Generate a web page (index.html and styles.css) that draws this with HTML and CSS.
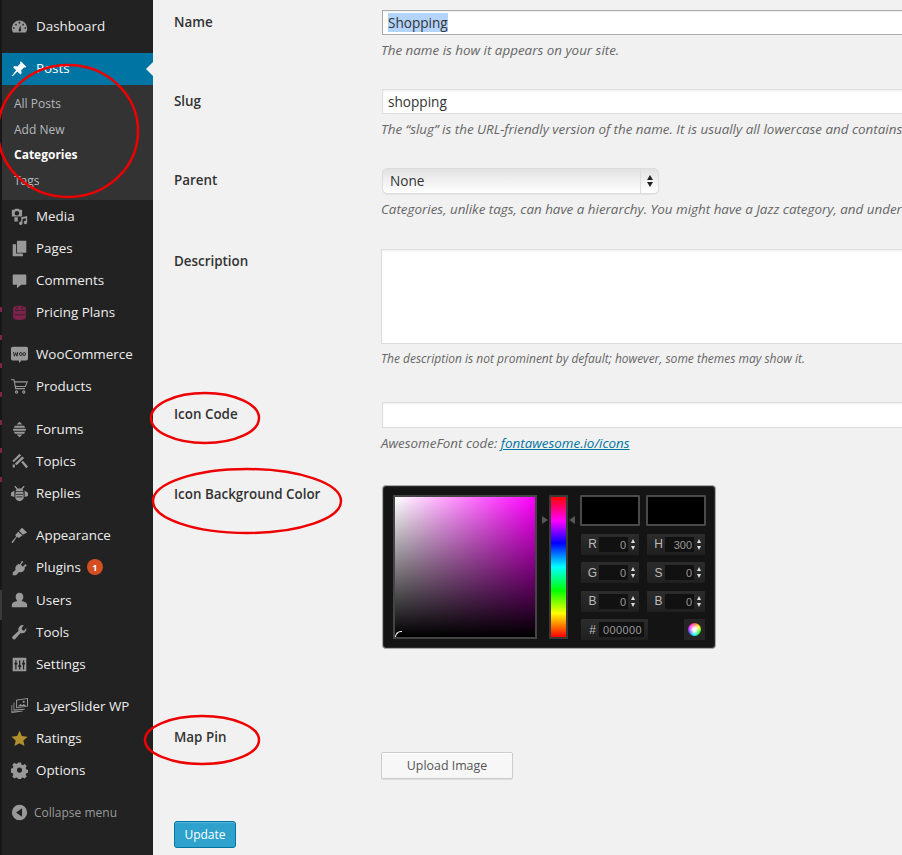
FILE: index.html
```html
<!DOCTYPE html>
<html lang="en">
<head>
<meta charset="utf-8">
<title>Edit Category</title>
<link rel="stylesheet" href="styles.css">
</head>
<body>
<div class="app">
  <div class="strip"></div>
  <nav class="sidebar">
    <ul class="menu first">
      <li class="item"><svg class="ic" viewBox="0 0 20 20"><path d="M10 3a9 9 0 0 0-9 9c0 2 .6 3.600 1.500 5h15c.9-1.400 1.500-3 1.500-5a9 9 0 0 0-9-9zM4 13H2.500v-2H4zm2-4-1.500-1L6 6.500 7 8zm3-2.500V4.500h2v2zM10.500 16a1.500 1.500 0 0 1-1.300-2.200L11 8.500l.8 5.700a1.500 1.500 0 0 1-1.300 1.800zM14 9l-1-1 1.500-1.500 1 1.500zm3.500 4H16v-2h1.500z"/></svg><span>Dashboard</span></li>
    </ul>
    <ul class="menu">
      <li class="item current"><svg class="ic" viewBox="0 0 20 20"><path d="M11.500 1.500 18 8l-1.500 1-1-.5-3.500 3.500.5 3.500-1.500 1.500-3.500-3.500L2 19l-1-.5L6 12 2.500 8.500 4 7l3.500.5L11 4l-.5-1z"/></svg><span>Posts</span></li>
      <li class="sub">
        <a>All Posts</a>
        <a>Add New</a>
        <a class="on">Categories</a>
        <a>Tags</a>
      </li>
      <li class="item"><svg class="ic" viewBox="0 0 20 20"><path fill-rule="evenodd" d="M1 2h3l1-1h4l1 1h3v8H1zm6 1.500a2.700 2.700 0 1 0 0 5.400 2.700 2.700 0 0 0 0-5.400z"/><path d="M4 11h4v5H4zM12 11l7-1.500v7.500a2 2 0 1 1-1.500-1.900V12l-4 .8V18a2 2 0 1 1-1.500-1.900z"/></svg><span>Media</span></li>
      <li class="item"><svg class="ic" viewBox="0 0 20 20"><path d="M7 1h11v14H7zM2 5h4v11h8v3H2z"/></svg><span>Pages</span></li>
      <li class="item"><svg class="ic" viewBox="0 0 20 20"><path d="M3 3h14a1 1 0 0 1 1 1v10a1 1 0 0 1-1 1h-5l-5 4v-4H3a1 1 0 0 1-1-1V4a1 1 0 0 1 1-1z"/></svg><span>Comments</span></li>
      <li class="item"><svg class="ic plum" viewBox="0 0 20 20"><path d="M10 2c4.400 0 7.500 1.300 7.500 3v11c0 1.700-3.100 3-7.500 3s-7.500-1.300-7.500-3V5c0-1.700 3.100-3 7.500-3zM4 6.500v.8c2 1.400 10 1.400 12 0v-.8c-2 1.400-10 1.400-12 0zm0 5v.8c2 1.400 10 1.400 12 0v-.8c-2 1.400-10 1.400-12 0z"/><circle cx="7" cy="4.500" r="1" fill="#222"/><circle cx="13" cy="4.500" r="1" fill="#222"/></svg><span>Pricing Plans</span></li>
    </ul>
    <ul class="menu wide">
      <li class="item"><svg class="ic" viewBox="0 0 20 20"><path d="M2 1h16a2 2 0 0 1 2 2v12a2 2 0 0 1-2 2h-6l-2 3-1-3H2a2 2 0 0 1-2-2V3a2 2 0 0 1 2-2z"/><path d="M3 7l1 5 1.500-4 1.500 4 1-5M10 9.500a1.500 1.800 0 1 0 3 0 1.500 1.800 0 1 0-3 0zM14 9.500a1.500 1.800 0 1 0 3 0 1.500 1.800 0 1 0-3 0z" fill="none" stroke="#222" stroke-width="1.100"/></svg><span>WooCommerce</span></li>
      <li class="item"><svg class="ic line" viewBox="0 0 20 20"><path d="M0 2h3.500l2 10.500h11M4 4.500h15l-2 5.500H5.200"/><circle cx="6.500" cy="16.500" r="1.300"/><circle cx="15" cy="16.500" r="1.300"/></svg><span>Products</span></li>
    </ul>
    <ul class="menu">
      <li class="item"><svg class="ic" viewBox="0 0 20 20"><path d="M10 1l3.500 3h-7zM4.500 5.500h11l1 2.500h-13zM2.500 9h15v2.500h-15zM3.500 12.500h13l-1 2.500h-11zM6.500 16h7L10 19z"/></svg><span>Forums</span></li>
      <li class="item"><svg class="ic" viewBox="0 0 20 20"><path d="M10 1l2 2-9 8-1.500-1.500zM13 4l2.500 2-9 8.500-2-2zM12 11l2-2 6 7-2 2zM2 13.500h2.500V17H2z"/></svg><span>Topics</span></li>
      <li class="item"><svg class="ic" viewBox="0 0 20 20"><path d="M5 1l3 3h4l3-3 1 1-2.500 3 1 2H5.500l1-2L4 2zM5.500 8h9L15 15c-.500 2-2.500 4-5 4s-4.500-2-5-4zM4 6.500 0 9v4l4 1zM16 6.500 20 9v4l-4 1z"/><path d="M6 11h8M6.500 14h7" stroke="#222" fill="none"/></svg><span>Replies</span></li>
    </ul>
    <ul class="menu">
      <li class="item"><svg class="ic" viewBox="0 0 20 20"><path d="M13 1l6 5.500-5 2.500-4.500-4.500zM8.500 5.500l5 4.500L9 13l-2-1.500L2 19l-1.500-1.500 5.500-6L5 9.500z"/></svg><span>Appearance</span></li>
      <li class="item"><svg class="ic" viewBox="0 0 20 20"><path d="M13 2l1.500 1.500-3 3L14 9l3-3 1.500 1.500-3 3 1 1-2 3a5 5 0 0 1-5 .8L6 19H2v-3l3.500-3.500a5 5 0 0 1 .8-5l3-2 1 1z"/></svg><span>Plugins</span><b class="badge">1</b></li>
      <li class="item nudge"><svg class="ic" viewBox="0 0 20 20"><path d="M10 1a4.500 4.500 0 0 1 4.500 5c0 2-1 3.500-2 4.500 3 .8 6.500 2 6.500 4.500v3H1v-3c0-2.500 3.500-3.700 6.500-4.500-1-1-2-2.500-2-4.500A4.500 4.500 0 0 1 10 1z"/></svg><span>Users</span></li>
      <li class="item"><svg class="ic" viewBox="0 0 20 20"><path d="M18 4.500a5 5 0 0 1-6.700 6L5 17.500a2 2 0 0 1-3-3l7-6.500a5 5 0 0 1 6-6.500L12.500 5l.8 2 2 .8z"/></svg><span>Tools</span></li>
      <li class="item"><svg class="ic" viewBox="0 0 20 20"><path fill-rule="evenodd" d="M2 2h16v16H2zM5 5v3H4v2h1v6h1.500v-6h1V8h-1V5zm4.500 0v6l-1 .01-.01 2 1 .01V16H11v-3h1v-2h-1V5zm4.500 0v3h-1v2h1v6h1.500v-6h1V8h-1V5z"/></svg><span>Settings</span></li>
    </ul>
    <ul class="menu">
      <li class="item"><svg class="ic" viewBox="0 0 20 20"><path fill-rule="evenodd" d="M6 2 20 0v10L6 12zm1.200 1v8l11.600-1.700V1.300zM4 5v8.500l12-1v1.300L3 15V5.500zM1.500 8v8l12-.9V16L.5 17.500v-9z"/><path d="M8 10l3-3 2 1.500 2-1.500 3 2.500z"/><circle cx="15" cy="4.500" r="1.300"/></svg><span>LayerSlider WP</span></li>
      <li class="item"><svg class="ic gold" viewBox="0 0 20 20"><path d="M10 1l2.800 6 6.700.8-5 4.500 1.400 6.600L10 15.600 4.100 18.900l1.400-6.600-5-4.500 6.700-.8z"/></svg><span>Ratings</span></li>
      <li class="item"><svg class="ic" viewBox="0 0 20 20"><path fill-rule="evenodd" d="M8.300 1h3.400l.5 2.400 1.800.8 2.100-1.300 2.400 2.400-1.300 2.100.8 1.800 2.400.5v3.400l-2.400.5-.8 1.800 1.300 2.100-2.400 2.400-2.100-1.300-1.800.8-.5 2.400H8.300l-.5-2.400-1.800-.8-2.100 1.300-2.400-2.400 1.300-2.100-.8-1.800-2.400-.5V8.300l2.400-.5.800-1.800-1.300-2.100 2.400-2.400 2.100 1.300 1.800-.8zM10 7a3 3 0 1 0 0 6 3 3 0 0 0 0-6z" transform="translate(0 -.5)"/></svg><span>Options</span></li>
    </ul>
    <div class="collapse"><svg class="ic" viewBox="0 0 20 20"><path fill-rule="evenodd" d="M10 1a9 9 0 1 1 0 18 9 9 0 0 1 0-18zm3 4-7 5 7 5z"/></svg><span>Collapse menu</span></div>
  </nav>
  <main class="content">
    <form class="form">
      <div class="row r-name">
        <label>Name</label>
        <div class="field">
          <input class="text focused" type="text" value="Shopping" id="name">
          <p class="hint">The name is how it appears on your site.</p>
        </div>
      </div>
      <div class="row r-slug">
        <label>Slug</label>
        <div class="field">
          <div class="text">shopping</div>
          <p class="hint">The “slug” is the URL-friendly version of the name. It is usually all lowercase and contains</p>
        </div>
      </div>
      <div class="row r-parent">
        <label>Parent</label>
        <div class="field">
          <div class="select"><span class="sel-val">None</span><span class="sel-arrows"><i class="up"></i><i class="down"></i></span></div>
          <p class="hint">Categories, unlike tags, can have a hierarchy. You might have a Jazz category, and under</p>
        </div>
      </div>
      <div class="row r-desc">
        <label>Description</label>
        <div class="field">
          <div class="area"></div>
          <p class="hint small">The description is not prominent by default; however, some themes may show it.</p>
        </div>
      </div>
      <div class="row r-code">
        <label>Icon Code</label>
        <div class="field">
          <div class="text tall"></div>
          <p class="hint">AwesomeFont code: <a class="link">fontawesome.io/icons</a></p>
        </div>
      </div>
      <div class="row r-color">
        <label>Icon Background Color</label>
        <div class="field">
          <div class="picker">
            <div class="sb"><i class="sb-mark"></i></div>
            <div class="hue-wrap"><i class="tri left"></i><div class="hue"></div><i class="tri right"></i></div>
            <div class="vals">
              <div class="swatch"></div><div class="swatch"></div>
              <div class="val"><b>R</b><span>0</span><i></i></div><div class="val"><b>H</b><span>300</span><i></i></div>
              <div class="val"><b>G</b><span>0</span><i></i></div><div class="val"><b>S</b><span>0</span><i></i></div>
              <div class="val"><b>B</b><span>0</span><i></i></div><div class="val"><b>B</b><span>0</span><i></i></div>
              <div class="val hex"><b>#</b><span>000000</span></div>
              <div class="wheel-box"><div class="wheel"></div></div>
            </div>
          </div>
        </div>
      </div>
      <div class="row r-pin">
        <label>Map Pin</label>
        <div class="field"><button class="btn" type="button">Upload Image</button></div>
      </div>
      <button class="primary" type="button">Update</button>
    </form>
  </main>
</div>
<svg class="marks" viewBox="0 0 902 855" aria-hidden="true">
  <ellipse cx="68" cy="131" rx="70" ry="66"/>
  <ellipse cx="205" cy="418" rx="54" ry="25"/>
  <ellipse cx="247" cy="501" rx="94" ry="32"/>
  <ellipse cx="202" cy="740" rx="57" ry="24"/>
</svg>
<script>document.getElementById('name').select();</script>
</body>
</html>
```
FILE: styles.css
```css
* { box-sizing: border-box; }
html, body { margin: 0; height: 100%; overflow: hidden; }
body { background: #f1f1f1; color: #333; font-family: "Open Sans", sans-serif; font-size: 13px; }
ul { list-style: none; margin: 0; padding: 0; }
.app { display: flex; width: 902px; height: 855px; overflow: hidden; }
.strip {
  flex: 0 0 2px;
  background:
    linear-gradient(#7d2248, #7d2248) 0 307px / 2px 5px no-repeat,
    linear-gradient(#7d2248, #7d2248) 0 335px / 2px 5px no-repeat,
    linear-gradient(#7d2248, #7d2248) 0 363px / 2px 5px no-repeat,
    linear-gradient(#7d2248, #7d2248) 0 392px / 2px 5px no-repeat,
    linear-gradient(#7d2248, #7d2248) 0 420px / 2px 5px no-repeat,
    linear-gradient(#7d2248, #7d2248) 0 448px / 2px 5px no-repeat,
    linear-gradient(#7d2248, #7d2248) 0 477px / 2px 5px no-repeat,
    linear-gradient(#3a3a3a, #3a3a3a) 0 590px / 2px 30px no-repeat,
    #171717;
}
.sidebar { flex: 0 0 151px; background: #222; color: #eee; padding-top: 10px; height: 855px; }
.menu { margin-bottom: 10px; }
.menu.first { margin-bottom: 11px; }
.menu.wide { margin-bottom: 11px; }
.item { position: relative; display: flex; align-items: center; height: 32px; padding-left: 9px; font-size: 13.400px; color: #eee; }
.item.nudge { margin-top: 1px; }
.item.current { padding-bottom: 2px; background: #0074a2; color: #fff; }
.item.current::after { content: ""; position: absolute; right: 0; top: 9px; border: 7px solid transparent; border-right-color: #f1f1f1; border-left-width: 0; }
.item.current .ic { fill: #fff; }
.ic { width: 17px; height: 17px; flex: none; margin-right: 8px; fill: #999; }
.ic.plum { fill: #7d2248; }
.ic.gold { fill: #b0902e; }
.ic.line { fill: none; stroke: #999; stroke-width: 1.300; }
.sub { background: #333; height: 115px; padding: 6px 0 0 12px; display: flex; flex-direction: column; font-size: 12px; color: #b4b9be; }
.sub a { height: 25.500px; line-height: 25.500px; }
.sub a.on { color: #fff; font-weight: 700; }
.badge { display: inline-flex; align-items: center; justify-content: center; width: 16px; height: 16px; margin-left: 6px; border-radius: 50%; background: #d54e21; color: #fff; font-size: 9px; font-weight: 700; }
.collapse { display: flex; align-items: center; height: 32px; margin-top: 10px; padding-left: 9px; font-size: 12px; color: #999; }
.collapse .ic { width: 17px; height: 17px; margin-right: 6px; }
.content { flex: 1; min-width: 0; overflow: hidden; padding: 10px 0 0 21px; }
.form { width: 1000px; display: flex; flex-direction: column; align-items: flex-start; }
.row { display: flex; width: 100%; }
.row label { flex: 0 0 207px; font-size: 13.400px; font-weight: 600; color: #333; line-height: 25px; }
.field { flex: 1; min-width: 0; }
.r-name { height: 79px; }
.r-slug { height: 79px; }
.r-parent { height: 81px; }
.r-desc { height: 153px; }
.r-desc label { line-height: 24px; }
.r-code { height: 83px; }
.r-color { height: 240px; }
.r-color label { line-height: 18px; }
.r-pin { height: 96px; }
.r-pin label { line-height: 24px; }
.text { display: block; width: calc(100% - 1px); height: 25px; margin-left: 1px; padding: 0 5px; border: 1px solid #ddd; background: #fff; color: #333; font: 13.600px/23px "Open Sans", sans-serif; box-shadow: inset 0 1px 2px rgba(0,0,0,.07); }
.text.focused { border: 1px solid #aaa; outline: 0; border-radius: 0; }
.text.focused::selection { background: #b3d4fc; color: #333; }
.text.tall { height: 26px; }
.hint { margin: 7px 0 0; font-size: 13.400px; line-height: 16px; font-style: italic; color: #666; white-space: nowrap; }
.hint.small { font-size: 12px; }
.select { display: flex; width: 277px; height: 26px; margin-left: 1px; border: 1px solid #ddd; border-radius: 5px; background: linear-gradient(#e2e2e2, #fff); font-size: 13.600px; box-shadow: 0 1px 1px rgba(0,0,0,.05); }
.sel-val { flex: 1; padding-left: 7px; line-height: 24px; color: #333; border-right: 1px solid #ddd; }
.sel-arrows { flex: 0 0 17px; display: flex; flex-direction: column; align-items: center; justify-content: center; gap: 2px; }
.sel-arrows i { width: 0; height: 0; border: 3.500px solid transparent; }
.sel-arrows .up { border-top-width: 0; border-bottom: 5px solid #222; }
.sel-arrows .down { border-bottom-width: 0; border-top: 5px solid #222; }
.area { height: 95px; border: 1px solid #ddd; background: #fff; box-shadow: inset 0 1px 2px rgba(0,0,0,.07); }
.link { color: #0074a2; text-decoration: underline; }
.picker { display: flex; width: 334px; height: 164px; margin-left: 1px; padding: 9px 9px 9px 10px; background: #141414; border: 1px solid #a8a8a8; border-radius: 4px; box-shadow: inset 0 0 0 1px #2a2a2a; }
.sb { position: relative; flex: 0 0 144px; height: 144px; border: 2px solid #444; background: linear-gradient(rgba(0,0,0,0), #000), linear-gradient(90deg, #fff, rgba(255,255,255,0)), #f0f; }
.sb-mark { position: absolute; left: 0; bottom: 0; width: 7px; height: 6px; border: 1px solid #fff; border-right: 0; border-bottom: 0; border-radius: 6px 0 0 0; }
.hue-wrap { position: relative; flex: 0 0 19px; height: 144px; margin: 0 12px; }
.hue { height: 100%; border: 2px solid #3a3a3a; background: linear-gradient(#f00, #f0f 17%, #00f 33%, #0ff 50%, #0f0 67%, #ff0 83%, #f00); }
.tri { position: absolute; top: 21px; border: 4px solid transparent; }
.tri.left { left: -7px; border-left: 6px solid #555; border-right-width: 0; }
.tri.right { right: -7px; border-right: 6px solid #555; border-left-width: 0; }
.vals { flex: 0 0 126px; display: grid; grid-template-columns: 60px 60px; grid-template-rows: 31px 21px 21px 21px 21px; column-gap: 6px; row-gap: 7.500px; font-family: "Liberation Sans", sans-serif; }
.swatch { height: 31px; background: #000; border: 2px solid #4a4a4a; border-radius: 1px; }
.val { display: flex; align-items: center; width: 58px; height: 21px; margin-left: 1px; padding-left: 5px; background: linear-gradient(#2c2c2c, #202020); border-radius: 1px; color: #bbb; font-size: 12px; }
.val b { width: 13px; font-weight: 400; text-align: center; }
.val span { width: 29px; height: 15px; padding-right: 2px; background: #111; text-align: right; color: #999; font-size: 11px; line-height: 17px; }
.val i { position: relative; width: 11px; height: 9px; }
.val i::before, .val i::after { content: ""; position: absolute; left: 3px; border: 2.500px solid transparent; }
.val i::before { top: -1px; border-bottom: 4px solid #ddd; border-top-width: 0; }
.val i::after { bottom: -1px; border-top: 4px solid #ddd; border-bottom-width: 0; }
.val.hex { width: 67px; }
.val.hex span { width: 45px; letter-spacing: .4px; }
.wheel-box { display: flex; align-items: center; justify-content: center; justify-self: end; width: 21px; height: 21px; margin-right: 1px; background: #252525; }
.wheel { width: 13px; height: 13px; border-radius: 50%; background: radial-gradient(closest-side, #fff 20%, rgba(255,255,255,0)), conic-gradient(#f44, #ff0, #0f0, #0ff, #44f, #f0f, #f44); }
.btn { display: block; width: 132px; height: 27px; margin-top: 27px; padding: 0; background: #f7f7f7; border: 1px solid #ccc; border-radius: 2px; color: #555; font: 12.400px "Open Sans", sans-serif; box-shadow: 0 1px 0 #fff inset, 0 1px 0 rgba(0,0,0,.08); }
.primary { width: 62px; height: 27px; padding: 0; background: #2ea2cc; border: 1px solid #0074a2; border-radius: 3px; color: #fff; font: 12px "Open Sans", sans-serif; box-shadow: inset 0 1px 0 rgba(120,200,230,.5); }
.marks { position: absolute; left: 0; top: 0; width: 902px; height: 855px; pointer-events: none; }
.marks ellipse { fill: none; stroke: #ee0000; stroke-width: 2.500; }
```
